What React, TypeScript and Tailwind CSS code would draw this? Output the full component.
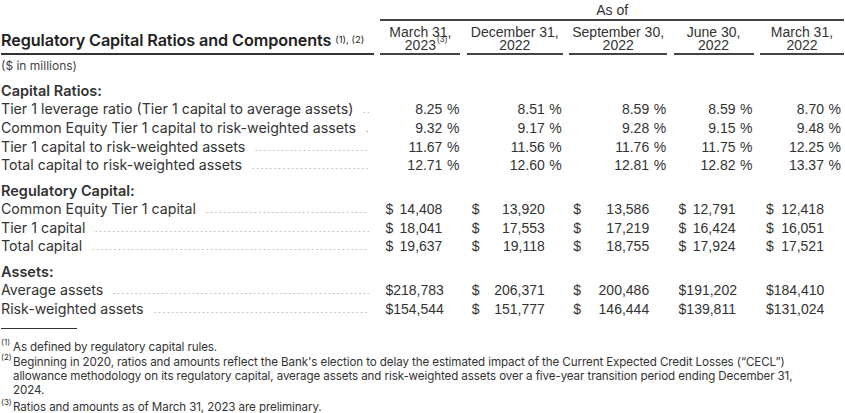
const cols = ['March 31,|2023', 'December 31,|2022', 'September 30,|2022', 'June 30,|2022', 'March 31,|2022']

type Row = { label: string; values: string[]; kind: 'pct' | 'usd' }

const sections: Array<{ title: string; rows: Row[] }> = [
  {
    title: 'Capital Ratios:',
    rows: [
      { label: 'Tier 1 leverage ratio (Tier 1 capital to average assets)', kind: 'pct', values: ['8.25', '8.51', '8.59', '8.59', '8.70'] },
      { label: 'Common Equity Tier 1 capital to risk-weighted assets', kind: 'pct', values: ['9.32', '9.17', '9.28', '9.15', '9.48'] },
      { label: 'Tier 1 capital to risk-weighted assets', kind: 'pct', values: ['11.67', '11.56', '11.76', '11.75', '12.25'] },
      { label: 'Total capital to risk-weighted assets', kind: 'pct', values: ['12.71', '12.60', '12.81', '12.82', '13.37'] },
    ],
  },
  {
    title: 'Regulatory Capital:',
    rows: [
      { label: 'Common Equity Tier 1 capital', kind: 'usd', values: ['14,408', '13,920', '13,586', '12,791', '12,418'] },
      { label: 'Tier 1 capital', kind: 'usd', values: ['18,041', '17,553', '17,219', '16,424', '16,051'] },
      { label: 'Total capital', kind: 'usd', values: ['19,637', '19,118', '18,755', '17,924', '17,521'] },
    ],
  },
  {
    title: 'Assets:',
    rows: [
      { label: 'Average assets', kind: 'usd', values: ['218,783', '206,371', '200,486', '191,202', '184,410'] },
      { label: 'Risk-weighted assets', kind: 'usd', values: ['154,544', '151,777', '146,444', '139,811', '131,024'] },
    ],
  },
]

const grid = 'grid grid-cols-[373px_80px_96px_98px_80px_84px] gap-x-[6.4px]'
const label = "font-['Inter',sans-serif] text-[#333]"
const num = "font-['Liberation_Sans',Arial,sans-serif] text-[14px] text-[#333]"
// per-column cell padding (left $ position, right % slot end)
const cellPad = ['pl-[5px] pr-[1px]', 'pl-[5px] pr-[1px]', 'pl-[4px] pr-[1px]', 'pl-[5px] pr-[1px]', 'pl-[6px] pr-[3px]']

function Leader() {
  return (
    <div className="flex-1 ml-[9px] mr-[5px] mb-[4px] h-[3px] bg-[radial-gradient(circle,#b5b5b5_0.65px,transparent_1px)] bg-[length:4.4px_3px] bg-repeat-x" />
  )
}

export default function App() {
  return (
    <div className="w-[845px] h-[413px] bg-white pl-[1px] overflow-hidden">
      {/* Header */}
      <div className={grid}>
        <div />
        <div className={`col-span-5 h-[21px] border-b-2 border-[#444] text-center ${num} leading-[20px]`}>As of</div>
      </div>
      <div className={`${grid} h-[34px]`}>
        <div className="flex items-end border-b-2 border-[#333] pb-[3px]">
          <span className="font-['Inter',sans-serif] font-semibold text-[16.2px] text-[#222] leading-[20px] tracking-[-0.1px] whitespace-nowrap">
            Regulatory Capital Ratios and Components
            <sup className="text-[9.5px] font-normal ml-[4px] relative top-[-3px] tracking-normal">(1), (2)</sup>
          </span>
        </div>
        {cols.map((c, i) => {
          const [a, b] = c.split('|')
          return (
            <div key={i} className={`flex flex-col justify-end items-center border-b-2 border-[#444] pb-[2px] ${num} text-[13.6px] leading-[12.5px]`}>
              <span>{a}</span>
              <span className="relative">
                {b}
                {i === 0 && <span className="absolute left-full top-[-6px] ml-[1px] text-[8.5px]">(3)</span>}
              </span>
            </div>
          )
        })}
      </div>
      <div className={`${label} text-[12px] mt-[2px] h-[18px] leading-[18px] text-[#444]`}>($ in millions)</div>

      {sections.map((s) => (
        <div key={s.title} className="mt-[6px]">
          <div className={`${label} font-semibold text-[14.5px] h-[19px] leading-[19px] text-[#222]`}>{s.title}</div>
          {s.rows.map((r) => (
            <div key={r.label} className={`${grid} h-[18.7px] items-center`}>
              <div className="flex items-end">
                <span className={`${label} text-[14.2px] leading-[18px] whitespace-nowrap`}>{r.label}</span>
                <Leader />
              </div>
              {r.values.map((v, i) => (
                <div key={i} className={`flex ${num} leading-[18px] ${cellPad[i]}`}>
                  <span className="flex-1 flex justify-between">
                    <span>{r.kind === 'usd' ? '$' : ''}</span>
                    <span>{v}</span>
                  </span>
                  <span className="w-[17px] text-right">{r.kind === 'pct' ? '%' : ''}</span>
                </div>
              ))}
            </div>
          ))}
        </div>
      ))}

      {/* Footnotes */}
      <div className="mt-[10px] w-[76px] border-t border-[#333]" />
      <div className={`${label} text-[11.6px] tracking-[-0.1px] leading-[14px] mt-[11px] text-[#333]`}>
        <div className="flex">
          <span className="w-[12px] shrink-0 text-[8px] leading-[8px] -mt-[2px] tracking-normal">(1)</span>
          <span>As defined by regulatory capital rules.</span>
        </div>
        <div className="flex mt-[1px]">
          <span className="w-[12px] shrink-0 text-[8px] leading-[8px] -mt-[2px] tracking-normal">(2)</span>
          <span className="w-[800px]">
            Beginning in 2020, ratios and amounts reflect the Bank's election to delay the estimated impact of the Current Expected Credit Losses (“CECL”) allowance methodology on its regulatory capital, average assets and risk-weighted assets over a five-year transition period ending December 31, 2024.
          </span>
        </div>
        <div className="flex mt-[3px]">
          <span className="w-[12px] shrink-0 text-[8px] leading-[8px] -mt-[2px] tracking-normal">(3)</span>
          <span>Ratios and amounts as of March 31, 2023 are preliminary.</span>
        </div>
      </div>
    </div>
  )
}
